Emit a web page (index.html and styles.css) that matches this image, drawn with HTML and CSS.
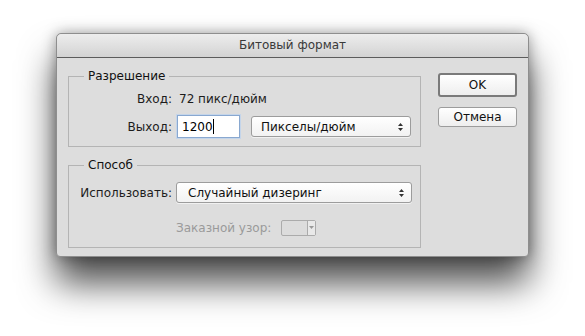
FILE: index.html
```html
<!DOCTYPE html>
<html lang="ru">
<head>
    <meta charset="UTF-8">
    <title>Битовый формат</title>
    <link rel="stylesheet" href="styles.css">
</head>
<body>
    <div class="window">
        <div class="titlebar">Битовый формат</div>
        <div class="content">
            <div class="groups">
                <fieldset class="group group-res">
                    <legend>Разрешение</legend>
                    <div class="row row-in">
                        <span class="label">Вход:</span>
                        <span class="value">72 пикс/дюйм</span>
                    </div>
                    <div class="row row-out">
                        <span class="label">Выход:</span>
                        <div class="field">1200<span class="caret"></span></div>
                        <div class="select select-units">
                            <span>Пикселы/дюйм</span>
                            <svg class="arrows" width="7" height="10" viewBox="0 0 7 10"><path d="M3.5 1 L6 4 L1 4 Z M3.5 9 L6 6 L1 6 Z" fill="#333"/></svg>
                        </div>
                    </div>
                </fieldset>
                <fieldset class="group group-method">
                    <legend>Способ</legend>
                    <div class="row row-use">
                        <span class="label">Использовать:</span>
                        <div class="select select-method">
                            <span>Случайный дизеринг</span>
                            <svg class="arrows" width="7" height="10" viewBox="0 0 7 10"><path d="M3.5 1 L6 4 L1 4 Z M3.5 9 L6 6 L1 6 Z" fill="#333"/></svg>
                        </div>
                    </div>
                    <div class="row row-pattern">
                        <span class="label"></span>
                        <span class="disabled-text">Заказной узор:</span>
                        <div class="pattern">
                            <div class="pattern-swatch"></div>
                            <div class="pattern-drop">
                                <svg width="5" height="4" viewBox="0 0 5 4"><path d="M0 0 L5 0 L2.5 3 Z" fill="#999"/></svg>
                            </div>
                        </div>
                    </div>
                </fieldset>
            </div>
            <div class="buttons">
                <button class="btn btn-default">OK</button>
                <button class="btn">Отмена</button>
            </div>
        </div>
    </div>
</body>
</html>
```

FILE: styles.css
```css
html {
    background-color: #fff;
}
body {
    margin: 0;
    padding: 33px 0 0 56px;
    min-height: 336px;
    box-sizing: border-box;
    overflow: hidden;
    background-color: #fff;
    font-family: 'DejaVu Sans', sans-serif;
    font-size: 12px;
    color: #1c1c1c;
}
.window {
    width: 471px;
    background-color: #dddddd;
    border: 1px solid #8e8e8e;
    border-radius: 5px 5px 4px 4px;
    box-shadow: 0 26px 36px rgba(0, 0, 0, 0.7), 0 0 14px rgba(0, 0, 0, 0.35);
}
.titlebar {
    height: 23px;
    line-height: 23px;
    text-align: center;
    font-size: 12px;
    color: #3a3a3a;
    background: linear-gradient(#ededed, #d3d3d3);
    border-bottom: 1px solid #5c5c5c;
    border-radius: 5px 5px 0 0;
}
.content {
    display: flex;
    padding: 0 11px;
    height: 198px;
}
.groups {
    width: 353px;
}
.group {
    margin: 10px 0 0 0;
    padding: 0;
    border: 1px solid #b4b4b4;
    min-inline-size: 0;
}
.group legend {
    margin-left: 15px;
    padding: 0 4px;
    line-height: 16px;
    font-size: 12px;
    color: #111;
}
.group-res {
    padding: 3px 0 8px 0;
}
.group-method {
    padding: 9px 0 11px 0;
}
.row {
    display: flex;
    align-items: center;
}
.row-in {
    height: 24px;
}
.row-out {
    margin-top: 4px;
    height: 23px;
}
.row-pattern {
    margin-top: 17px;
    height: 16px;
}
.label {
    width: 103px;
    text-align: right;
    margin-right: 4px;
    flex-shrink: 0;
}
.value {
    margin-left: 3px;
}
.field {
    display: flex;
    align-items: center;
    box-sizing: border-box;
    width: 63px;
    height: 23px;
    margin-left: 1px;
    padding-left: 4px;
    background-color: #fff;
    border: 1px solid #89a8d0;
    box-shadow: 0 0 0 1px #c4d5ea;
    color: #000;
}
.caret {
    display: inline-block;
    width: 1px;
    height: 15px;
    background-color: #000;
}
.select {
    display: flex;
    align-items: center;
    justify-content: space-between;
    box-sizing: border-box;
    height: 21px;
    padding: 0 6px 0 9px;
    background: linear-gradient(#ffffff, #f2f2f2);
    border: 1px solid #9c9c9c;
    border-radius: 3px;
    box-shadow: 0 1px 0 rgba(255, 255, 255, 0.6);
    color: #111;
}
.select-units {
    width: 160px;
    margin-left: 11px;
}
.select-method {
    width: 236px;
    padding-left: 11px;
}
.arrows {
    flex-shrink: 0;
}
.disabled-text {
    color: #9a9a9a;
}
.pattern {
    display: flex;
    box-sizing: border-box;
    width: 35px;
    height: 16px;
    margin-left: 10px;
    border: 1px solid #ababab;
    border-radius: 2px;
    background-color: #dcdcdc;
}
.pattern-swatch {
    flex: 1;
    border-right: 1px solid #ababab;
}
.pattern-drop {
    width: 7px;
    display: flex;
    align-items: center;
    justify-content: center;
    background-color: #e9e9e9;
}
.buttons {
    display: flex;
    flex-direction: column;
    margin-left: 17px;
    padding-top: 15px;
}
.btn {
    box-sizing: border-box;
    width: 79px;
    height: 20px;
    padding: 0;
    font-family: 'DejaVu Sans', sans-serif;
    font-size: 12px;
    color: #111;
    background: linear-gradient(#ffffff, #eeeeee);
    border: 1px solid #9c9c9c;
    border-radius: 3px;
}
.btn-default {
    height: 24px;
    border: 2px solid #7a7a7a;
    margin-bottom: 10px;
}
```
